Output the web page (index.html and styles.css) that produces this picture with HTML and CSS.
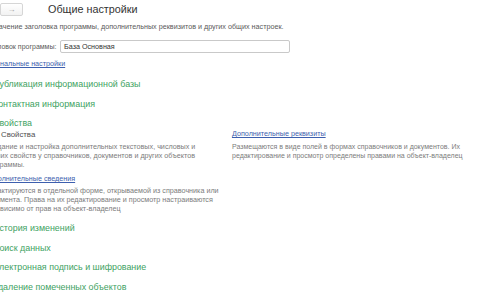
FILE: index.html
```html
<!DOCTYPE html>
<html lang="ru">
  <head>
    <meta charset="UTF-8" />
    <title>Общие настройки</title>
    <link rel="stylesheet" href="styles.css">
  </head>
  <body>
    <div class="page">
      <!-- шапка формы -->
      <div class="head">
        <div class="nav">
          <span class="navbtn">&larr;</span>
          <span class="navbtn">&rarr;</span>
        </div>
        <h1 class="title">Общие настройки</h1>
      </div>
      <p class="intro">Назначение заголовка программы, дополнительных реквизитов и других общих настроек.</p>
      <div class="field">
        <label class="label">Заголовок программы:</label>
        <div class="input">База Основная</div>
      </div>
      <a class="link top-link" href="#">Региональные настройки</a>

      <!-- группы -->
      <div class="group first">Публикация информационной базы</div>
      <div class="group">Контактная информация</div>
      <div class="group">Свойства</div>
      <div class="props">
        <div class="col left">
          <div class="check"><span class="box"></span>Свойства</div>
          <p class="note narrow">Создание и настройка дополнительных текстовых, числовых и прочих свойств у справочников, документов и других объектов программы.</p>
          <a class="link" href="#">Дополнительные сведения</a>
          <p class="note second">Редактируются в отдельной форме, открываемой из справочника или документа. Права на их редактирование и просмотр настраиваются независимо от прав на объект-владелец</p>
        </div>
        <div class="col right">
          <a class="link" href="#">Дополнительные реквизиты</a>
          <p class="note">Размещаются в виде полей в формах справочников и документов. Их редактирование и просмотр определены правами на объект-владелец</p>
        </div>
      </div>
      <div class="group after">История изменений</div>
      <div class="group">Поиск данных</div>
      <div class="group">Электронная подпись и шифрование</div>
      <div class="group">Удаление помеченных объектов</div>
    </div>
  </body>
</html>
```

FILE: styles.css
```css
/* сброс */
* {
  margin: 0;
  padding: 0;
  box-sizing: border-box;
}
body {
  background: #fff;
  font-family: "Liberation Sans", Arial, sans-serif;
  color: #444;
  overflow: hidden;
}
/* форма сдвинута влево, как на скриншоте */
.page {
  margin-left: -20px;
  width: 520px;
}
/* шапка */
.head {
  display: flex;
  align-items: center;
  height: 16px;
}
.nav {
  display: flex;
  gap: 1px;
  margin-left: -4px;
  margin-top: 2px;
}
.navbtn {
  width: 23px;
  height: 13px;
  border: 1px solid #d6d6d6;
  border-radius: 2px;
  font-size: 8px;
  line-height: 11px;
  text-align: center;
  color: #a0a0a0;
  background: linear-gradient(#fff, #f2f2f2);
}
.title {
  font-size: 10.8px;
  font-weight: normal;
  color: #333;
  margin-left: 25px;
  margin-top: 1px;
}
.intro {
  font-size: 7.2px;
  line-height: 10px;
  color: #5a5a5a;
  margin-top: 6px;
  margin-left: 2.5px;
}
/* поле заголовка */
.field {
  display: flex;
  align-items: center;
  margin-top: 8px;
  margin-left: 3px;
}
.label {
  flex: none;
  width: 77px;
  white-space: nowrap;
  font-size: 7px;
  color: #5a5a5a;
}
.input {
  width: 230px;
  height: 13px;
  border: 1px solid #c9c9c9;
  border-radius: 2px;
  font-size: 7.2px;
  line-height: 11px;
  padding-left: 3px;
  color: #333;
}
.link {
  display: block;
  font-size: 7.2px;
  line-height: 10px;
  color: #3d5fae;
  text-decoration: underline;
}
.top-link {
  margin-top: 6px;
  margin-left: 1px;
}
/* заголовки групп */
.group {
  font-size: 8.9px;
  line-height: 12px;
  color: #41a262;
  margin-top: 7.5px;
  margin-left: 13px;
}
.group.first {
  margin-top: 9px;
}
.group.after {
  margin-top: 9.5px;
}
/* свойства */
.props {
  display: flex;
}
.left {
  width: 240px;
  margin-left: 5px;
}
.right {
  width: 250px;
  margin-left: 7px;
}
.right .note {
  font-size: 7px;
}
.check {
  display: flex;
  align-items: center;
  height: 10px;
  font-size: 7.8px;
  color: #505050;
}
.box {
  width: 11px;
  height: 11px;
  margin-right: 5px;
}
.note {
  font-size: 7.2px;
  line-height: 9px;
  color: #7c7c7c;
  margin-top: 2.5px;
  margin-bottom: 5.5px;
}
.note.narrow {
  width: 215px;
}
.note.second {
  margin-top: 1.5px;
  margin-bottom: 0;
}
```
